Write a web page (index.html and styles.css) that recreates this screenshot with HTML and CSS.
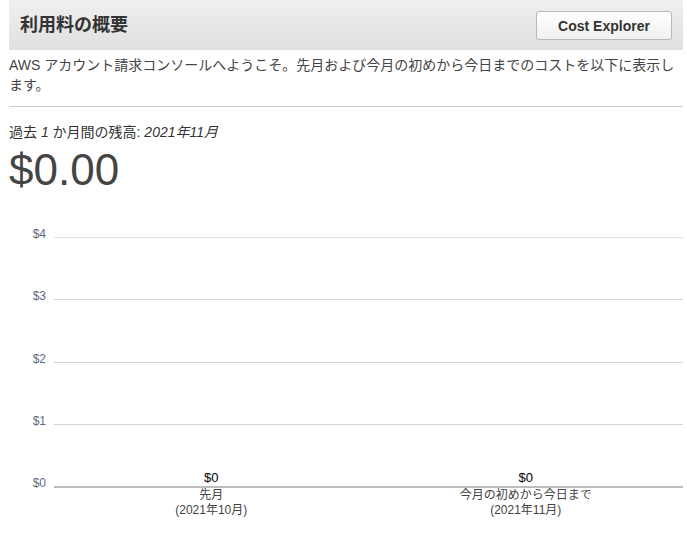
FILE: index.html
```html
<!DOCTYPE html>
<html lang="ja">
<head>
<meta charset="utf-8">
<title>利用料の概要</title>
<link rel="stylesheet" href="styles.css">
</head>
<body>
<div class="page">
  <div class="header">
    <h2 class="title">利用料の概要</h2>
    <button class="btn">Cost Explorer</button>
  </div>
  <p class="intro">AWS アカウント請求コンソールへようこそ。先月および今月の初めから今日までのコストを以下に表示します。</p>
  <div class="sep"></div>
  <div class="balance-label">過去 <i>1</i> か月間の残高: <i>2021年11月</i></div>
  <div class="balance">$0.00</div>
  <div class="chart">
    <div class="row first"><span class="tick">$4</span><span class="grid"></span></div>
    <div class="row"><span class="tick">$3</span><span class="grid"></span></div>
    <div class="row"><span class="tick">$2</span><span class="grid"></span></div>
    <div class="row"><span class="tick">$1</span><span class="grid"></span></div>
    <div class="row"><span class="tick">$0</span>
      <span class="grid base">
        <span class="val">$0</span>
        <span class="val">$0</span>
      </span>
    </div>
    <div class="xrow">
      <span class="xcat">先月<br>(2021年10月)</span>
      <span class="xcat">今月の初めから今日まで<br>(2021年11月)</span>
    </div>
  </div>
</div>
</body>
</html>
```

FILE: styles.css
```css
html, body {
  margin: 0;
  padding: 0;
  background: #fff;
}
body {
  font-family: "Liberation Sans", "Noto Sans CJK JP", sans-serif;
  color: #444;
}
.page {
  width: 674px;
  margin-left: 9px;
}
.header {
  height: 50px;
  box-sizing: border-box;
  display: flex;
  align-items: center;
  justify-content: space-between;
  padding: 0 11px;
  background: linear-gradient(#efefef, #e0e0e0);
}
.title {
  margin: 0;
  font-size: 18px;
  font-weight: bold;
  color: #333;
  line-height: 24px;
}
.btn {
  width: 136px;
  height: 29px;
  margin-top: 1px;
  border: 1px solid #b8b8b8;
  border-radius: 3px;
  background: linear-gradient(#ffffff, #f0f0f0);
  font-family: "Liberation Sans", sans-serif;
  font-size: 14px;
  font-weight: bold;
  color: #333;
  padding: 0;
}
.intro {
  margin: 5px 0 0;
  font-size: 14px;
  line-height: 20px;
  color: #444;
}
.sep {
  margin-top: 11px;
  border-top: 1px solid #ccc;
}
.balance-label {
  margin-top: 16px;
  font-size: 14px;
  line-height: 18px;
  color: #333;
}
.balance {
  margin-top: 4px;
  font-size: 44px;
  line-height: 50px;
  color: #444;
}
.chart {
  margin-top: 0;
}
.row {
  display: flex;
  align-items: flex-end;
  height: 62.3px;
}
.row.first {
  height: 43px;
}
.tick {
  width: 37px;
  text-align: right;
  font-size: 12px;
  line-height: 12px;
  color: #5d6b80;
  margin-bottom: -2px;
}
.grid {
  flex: 1;
  margin-left: 8px;
  border-bottom: 1px solid #d4d4d4;
  align-self: flex-end;
}
.row.first .grid {
  border-bottom-color: #e2e2e2;
}
.grid.base {
  display: flex;
  border-bottom: 2px solid #bdbdbd;
  margin-bottom: -1px;
}
.val {
  flex: 1;
  text-align: center;
  font-size: 13px;
  line-height: 15px;
  color: #000;
  padding-bottom: 1px;
}
.xrow {
  display: flex;
  margin-left: 45px;
  padding-top: 1px;
}
.xcat {
  flex: 1;
  text-align: center;
  font-size: 12px;
  line-height: 15px;
  color: #444;
}
```
